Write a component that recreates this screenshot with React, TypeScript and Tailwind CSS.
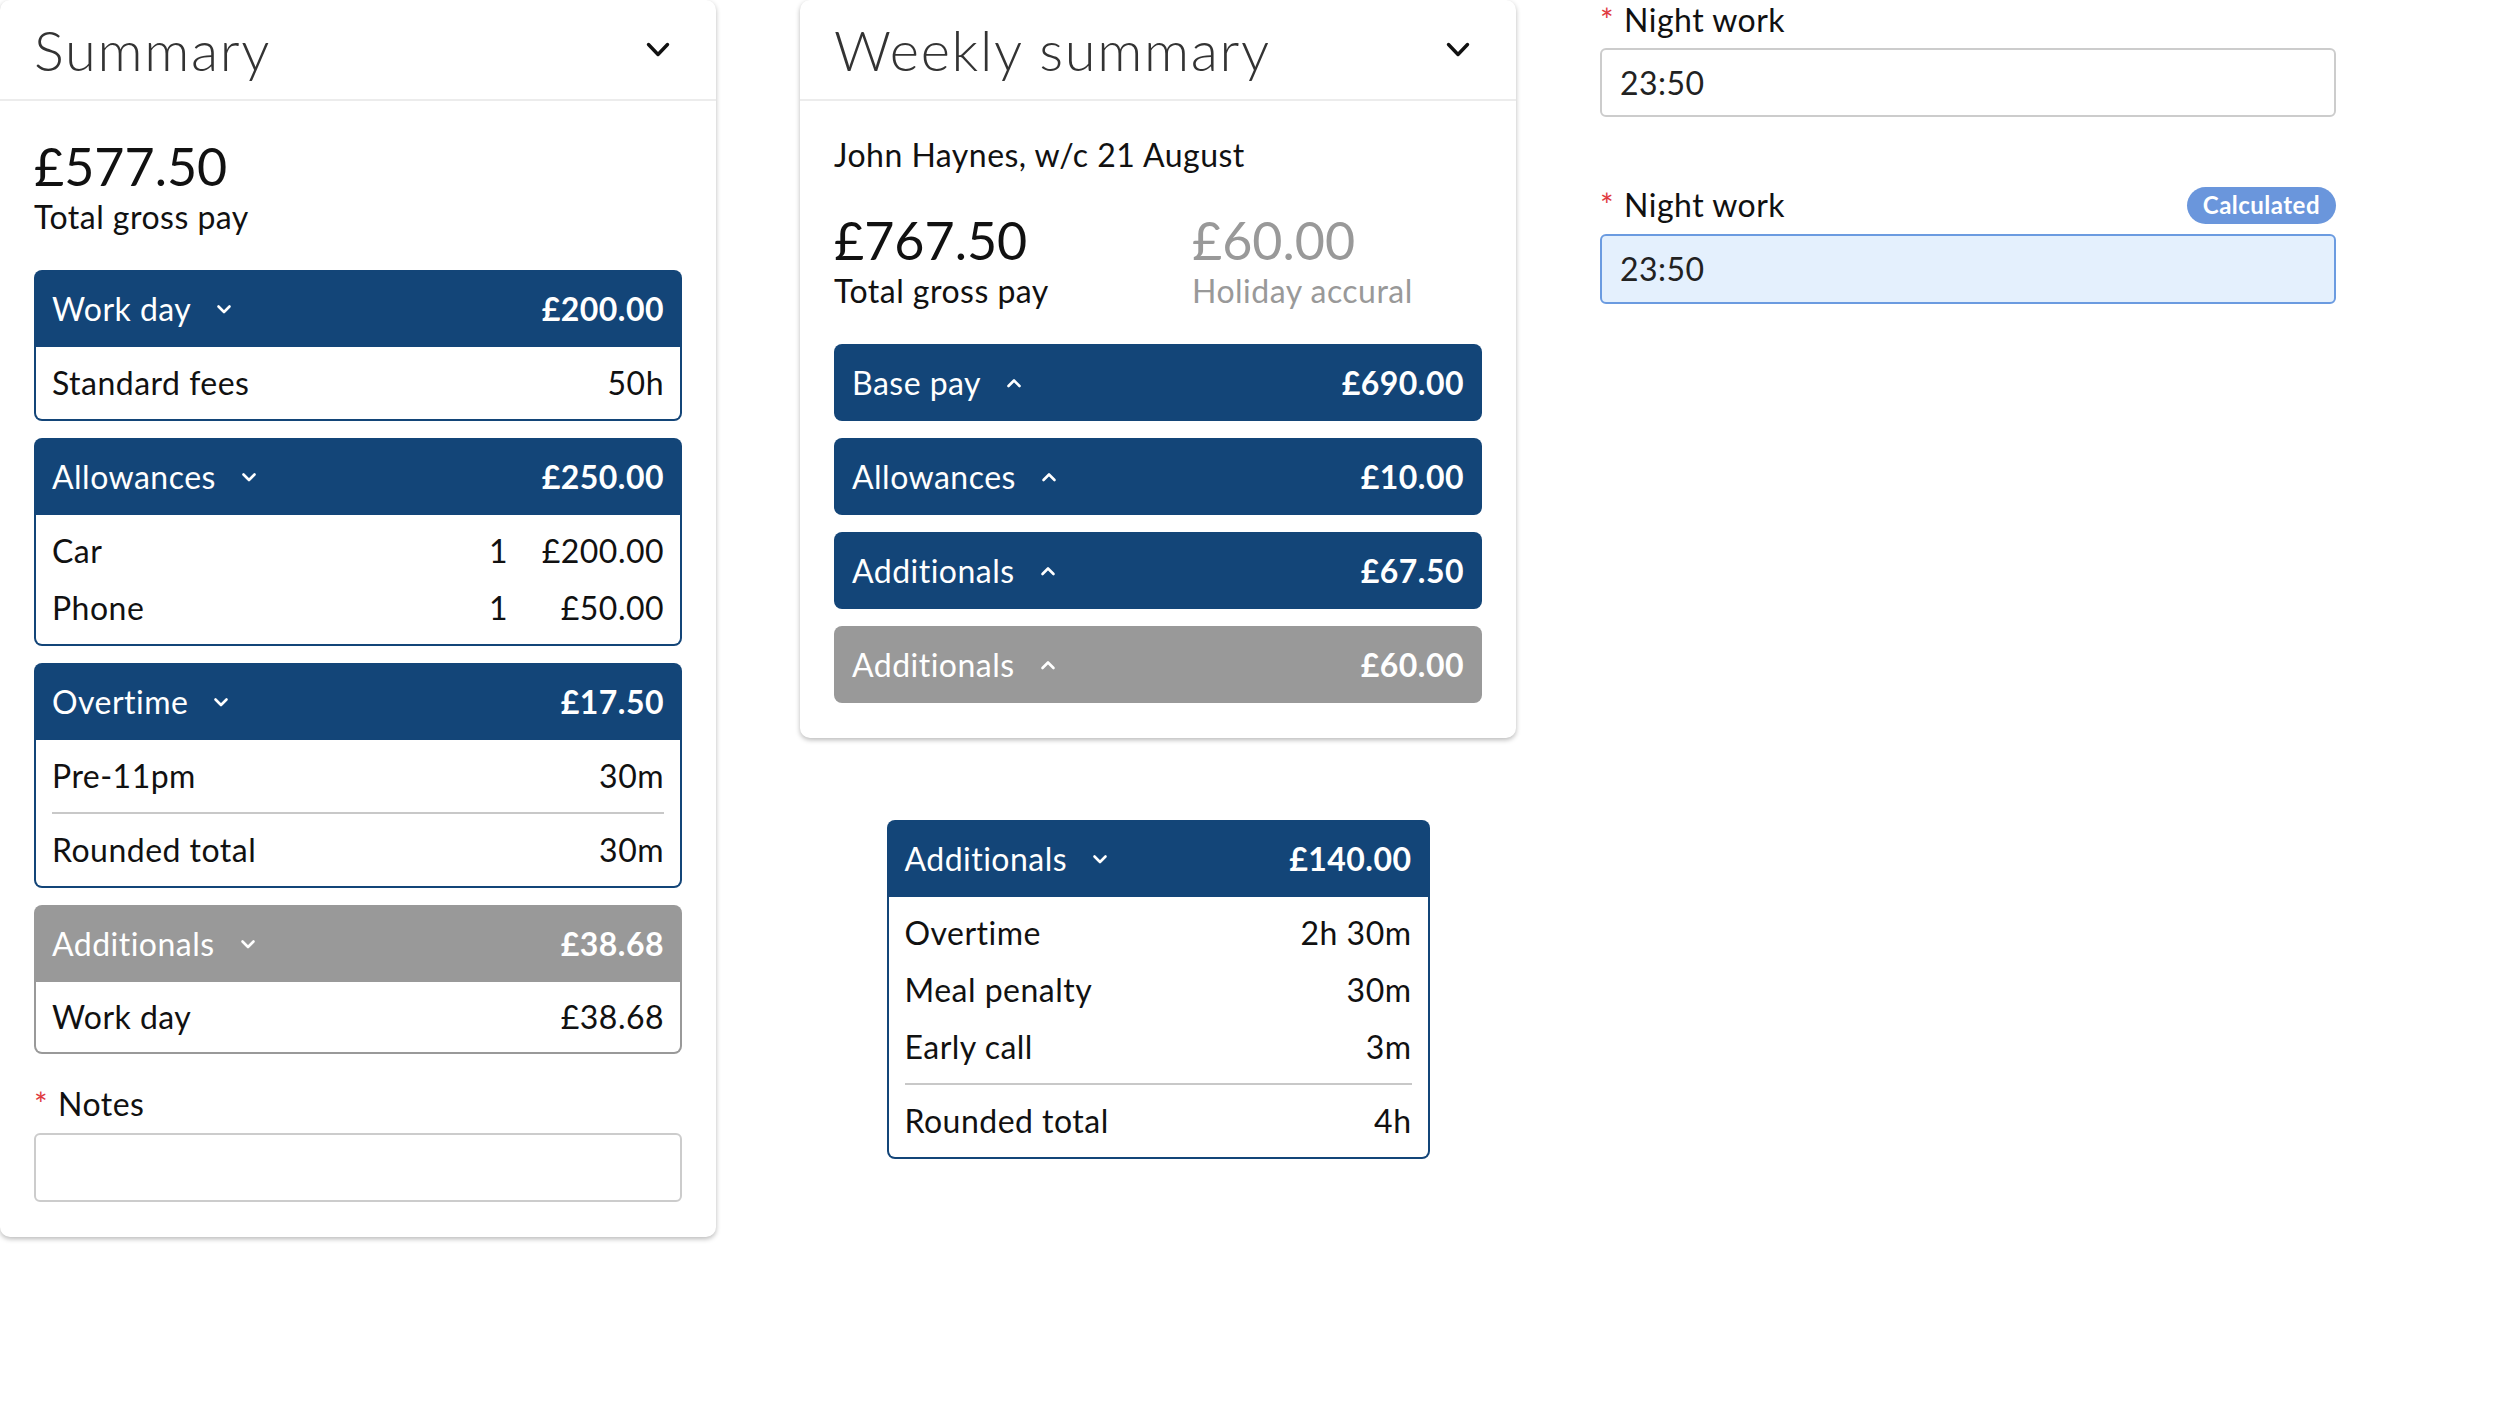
import React from 'react';
import clsx from 'clsx';

// Small chevron used in the pay cards
function Chevron({ up = false, className }: { up?: boolean; className?: string }) {
  return (
    <svg viewBox="0 0 18 18" className={clsx('h-[18px] w-[18px]', className)} fill="none">
      <path
        d={up ? 'M3.5 12 L9 6.5 L14.5 12' : 'M3.5 6.5 L9 12 L14.5 6.5'}
        stroke="currentColor"
        strokeWidth="2.6"
        strokeLinecap="round"
        strokeLinejoin="round"
      />
    </svg>
  );
}

function PanelChevron() {
  return (
    <svg viewBox="0 0 24 16" className="h-[16px] w-[24px] text-[#111]" fill="none">
      <path d="M2.5 2.5 L12 12.5 L21.5 2.5" stroke="currentColor" strokeWidth="3.4" strokeLinecap="round" strokeLinejoin="round" />
    </svg>
  );
}

interface CardProps {
  label: string;
  amount: string;
  grey?: boolean;
  up?: boolean;
  children?: React.ReactNode;
  className?: string;
}

function PayCard({ label, amount, grey = false, up = false, children, className }: CardProps) {
  return (
    <div className={clsx('overflow-hidden rounded-[8px]', grey ? 'bg-[#999999]' : 'bg-[#134578]', className)}>
      <div className="flex h-[77px] items-center justify-between px-[18px] text-white">
        <div className="flex items-center gap-[24px]">
          <span className="text-[32px]">{label}</span>
          <Chevron up={up} />
        </div>
        <span className="text-[32px] font-bold">{amount}</span>
      </div>
      {children && (
        <div
          className={clsx(
            'mx-[2px] mb-[2px] flex flex-col gap-[9px] rounded-b-[6px] bg-white px-[16px]',
            grey ? 'py-[11px]' : 'py-[12px]'
          )}
        >
          {children}
        </div>
      )}
    </div>
  );
}

function Row({ label, value, qty }: { label: string; value: string; qty?: string }) {
  return (
    <div className="flex h-[48px] items-center text-[32px] text-[#111]">
      <span className="flex-1">{label}</span>
      {qty && <span>{qty}</span>}
      <span className={clsx('text-right', qty ? 'w-[156px]' : '')}>{value}</span>
    </div>
  );
}

function Divider() {
  return <div className="my-[3px] h-[2px] bg-[#c8c8c8]" />;
}

function Panel({ title, children }: { title: string; children: React.ReactNode }) {
  return (
    <section className="w-[716px] shrink-0 rounded-[10px] bg-white shadow-[0_2px_5px_rgba(0,0,0,0.28)]">
      <header className="flex h-[101px] items-center justify-between border-b-2 border-[#ececec] pl-[34px] pr-[46px]">
        <h2 className="text-[56px] font-light tracking-[0.03em] text-[#333333]">{title}</h2>
        <PanelChevron />
      </header>
      <div className="px-[34px] pb-[35px] pt-[34px]">{children}</div>
    </section>
  );
}

function FieldLabel({ text, badge }: { text: string; badge?: string }) {
  return (
    <div className="flex h-[40px] items-center justify-between">
      <span className="text-[32px] text-[#111]">
        <span className="mr-[10px] text-[#e0393e]">*</span>
        {text}
      </span>
      {badge && (
        <span className="flex h-[37px] items-center rounded-full bg-[#6a96dc] px-[16px] text-[24px] font-bold text-white">
          {badge}
        </span>
      )}
    </div>
  );
}

export default function App() {
  return (
    <div className="flex min-h-screen items-start gap-[84px] bg-white font-[family-name:Lato,sans-serif] tracking-[0.03em]">
      {/* Daily summary */}
      <Panel title="Summary">
        <div className="text-[52px] leading-[62px] tracking-normal text-[#111]">£577.50</div>
        <div className="text-[32px] leading-[40px] text-[#111]">Total gross pay</div>

        <div className="mt-[33px] flex flex-col gap-[17px]">
          <PayCard label="Work day" amount="£200.00">
            <Row label="Standard fees" value="50h" />
          </PayCard>
          <PayCard label="Allowances" amount="£250.00">
            <Row label="Car" qty="1" value="£200.00" />
            <Row label="Phone" qty="1" value="£50.00" />
          </PayCard>
          <PayCard label="Overtime" amount="£17.50">
            <Row label="Pre-11pm" value="30m" />
            <Divider />
            <Row label="Rounded total" value="30m" />
          </PayCard>
          <PayCard label="Additionals" amount="£38.68" grey>
            <Row label="Work day" value="£38.68" />
          </PayCard>
        </div>

        <div className="mt-[30px]">
          <FieldLabel text="Notes" />
          <div className="mt-[9px] h-[69px] rounded-[6px] border-2 border-[#cccccc] bg-white" />
        </div>
      </Panel>

      {/* Weekly summary with an expanded card below */}
      <div className="flex shrink-0 flex-col items-center">
        <Panel title="Weekly summary">
          <div className="text-[32px] leading-[40px] text-[#111]">John Haynes, w/c 21 August</div>
          <div className="mt-[34px] flex">
            <div className="w-[358px]">
              <div className="text-[52px] leading-[62px] tracking-normal text-[#111]">£767.50</div>
              <div className="text-[32px] leading-[40px] text-[#111]">Total gross pay</div>
            </div>
            <div>
              <div className="text-[52px] leading-[62px] tracking-normal text-[#999999]">£60.00</div>
              <div className="text-[32px] leading-[40px] text-[#999999]">Holiday accural</div>
            </div>
          </div>

          <div className="mt-[33px] flex flex-col gap-[17px]">
            <PayCard label="Base pay" amount="£690.00" up />
            <PayCard label="Allowances" amount="£10.00" up />
            <PayCard label="Additionals" amount="£67.50" up />
            <PayCard label="Additionals" amount="£60.00" up grey />
          </div>
        </Panel>

        <PayCard label="Additionals" amount="£140.00" className="mt-[82px] w-[543px]">
          <Row label="Overtime" value="2h 30m" />
          <Row label="Meal penalty" value="30m" />
          <Row label="Early call" value="3m" />
          <Divider />
          <Row label="Rounded total" value="4h" />
        </PayCard>
      </div>

      {/* Form fields */}
      <div className="flex w-[736px] shrink-0 flex-col">
        <FieldLabel text="Night work" />
        <div className="mt-[8px] flex h-[69px] items-center rounded-[6px] border-2 border-[#cccccc] px-[18px] text-[32px] text-[#222]">
          23:50
        </div>
        <div className="mt-[68px]">
          <FieldLabel text="Night work" badge="Calculated" />
        </div>
        <div className="mt-[9px] flex h-[70px] items-center rounded-[6px] border-2 border-[#6b9be0] bg-[#e4f0fd] px-[18px] text-[32px] text-[#222]">
          23:50
        </div>
      </div>
    </div>
  );
}
